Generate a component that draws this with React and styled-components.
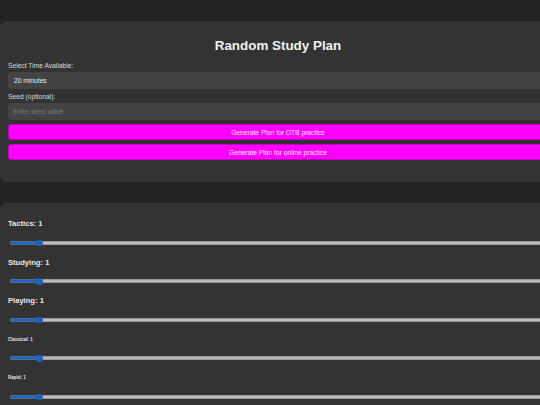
import React, { useState } from "react";
import styled, { createGlobalStyle } from "styled-components";

const GlobalStyle = createGlobalStyle`
  html, body {
    margin: 0;
    padding: 0;
    background: #232323;
    overflow: hidden;
  }
  body {
    font-family: "Liberation Sans", Arial, sans-serif;
    color: #e6e6e6;
  }
`;

const Page = styled.div`
  width: 540px;
  padding-top: 21px;
`;

const Card = styled.section`
  width: 100%;
  box-sizing: content-box;
  padding: ${(p) => p.$top || "8px"} 8px ${(p) => p.$bottom || "8px"};
  background: #333333;
  border-radius: 6px;
  margin-bottom: 21px;
`;

const Title = styled.h1`
  margin: 9px 0 8px;
  font-size: 13.4px;
  line-height: 16px;
  font-weight: bold;
  color: #f2f2f2;
  text-align: center;
`;

const FieldLabel = styled.label`
  display: block;
  font-size: 6.7px;
  line-height: 8px;
  margin-bottom: 2px;
  color: #dcdcdc;
`;

const fieldBox = `
  display: block;
  width: 100%;
  box-sizing: border-box;
  height: 17px;
  margin: 0 0 4px;
  border: none;
  border-radius: 3px;
  background: #444444;
  font-family: "Liberation Sans", Arial, sans-serif;
  font-size: 6.7px;
  color: #ececec;
  outline: none;
`;

const TimeSelect = styled.select`
  ${fieldBox}
  appearance: none;
  -webkit-appearance: none;
  padding: 0 6px;
`;

const SeedInput = styled.input`
  ${fieldBox}
  padding: 0 5px;
  &::placeholder {
    color: #7a7a7a;
  }
`;

const PlanButton = styled.button`
  display: block;
  width: 100%;
  height: 16px;
  margin: 0 0 4px;
  padding: 0;
  border: 1px solid #c400c4;
  border-radius: 3px;
  background: #ff00ff;
  color: #ffe6ff;
  font-family: "Liberation Sans", Arial, sans-serif;
  font-size: 6.7px;
  cursor: pointer;
`;

const SliderGroup = styled.div`
  height: 38.5px;
`;

const SliderLabel = styled.div`
  height: 10px;
  line-height: 10px;
  font-weight: bold;
  font-size: ${(p) => (p.$small ? "4.5px" : "7.6px")};
  color: #e8e8e8;
  margin-bottom: 10.7px;
`;

const Slider = styled.input.attrs({ type: "range" })`
  -webkit-appearance: none;
  appearance: none;
  display: block;
  width: calc(100% - 4px);
  height: 6px;
  margin: 0 2px;
  padding: 0;
  background: transparent;

  &::-webkit-slider-runnable-track {
    height: 4px;
    border-radius: 2px;
    box-shadow: inset 0 0 0 0.6px #7a7a7a;
    background: linear-gradient(
      to right,
      #1f62c0 0,
      #1f62c0 var(--fill),
      #b9b9b9 var(--fill)
    );
  }

  &::-webkit-slider-thumb {
    -webkit-appearance: none;
    width: 6.5px;
    height: 6.5px;
    margin-top: -1.25px;
    border-radius: 50%;
    background: #1f62c0;
    border: none;
  }
`;

const MAX = 20;

const categories = [
  { key: "tactics", label: "Tactics" },
  { key: "studying", label: "Studying" },
  { key: "playing", label: "Playing" },
  { key: "classical", label: "Classical", small: true },
  { key: "rapid", label: "Rapid", small: true },
];

export default function App() {
  const [time, setTime] = useState("20");
  const [seed, setSeed] = useState("");
  const [weights, setWeights] = useState({
    tactics: 1,
    studying: 1,
    playing: 1,
    classical: 1,
    rapid: 1,
  });

  const updateWeight = (key, value) => {
    setWeights((prev) => ({ ...prev, [key]: Number(value) }));
  };

  return (
    <>
      <GlobalStyle />
      <Page>
        <Card $bottom="18px">
          <Title>Random Study Plan</Title>
          <FieldLabel htmlFor="time">Select Time Available:</FieldLabel>
          <TimeSelect
            id="time"
            value={time}
            onChange={({ target }) => setTime(target.value)}
          >
            <option value="10">10 minutes</option>
            <option value="20">20 minutes</option>
            <option value="30">30 minutes</option>
            <option value="60">60 minutes</option>
          </TimeSelect>
          <FieldLabel htmlFor="seed">Seed (optional):</FieldLabel>
          <SeedInput
            id="seed"
            type="text"
            placeholder="Enter seed value"
            value={seed}
            onChange={({ target }) => setSeed(target.value)}
          />
          <PlanButton type="button">Generate Plan for OTB practice</PlanButton>
          <PlanButton type="button">Generate Plan for online practice</PlanButton>
        </Card>

        <Card $top="16.3px">
          {categories.map((cat) => {
            const value = weights[cat.key];
            const frac = value / MAX;
            return (
              <SliderGroup key={cat.key}>
                <SliderLabel $small={cat.small}>
                  {cat.label}: {value}
                </SliderLabel>
                <Slider
                  min={0}
                  max={MAX}
                  value={value}
                  onChange={({ target }) => updateWeight(cat.key, target.value)}
                  style={{ "--fill": `calc(3.25px + (100% - 6.5px) * ${frac})` }}
                />
              </SliderGroup>
            );
          })}
        </Card>
      </Page>
    </>
  );
}
